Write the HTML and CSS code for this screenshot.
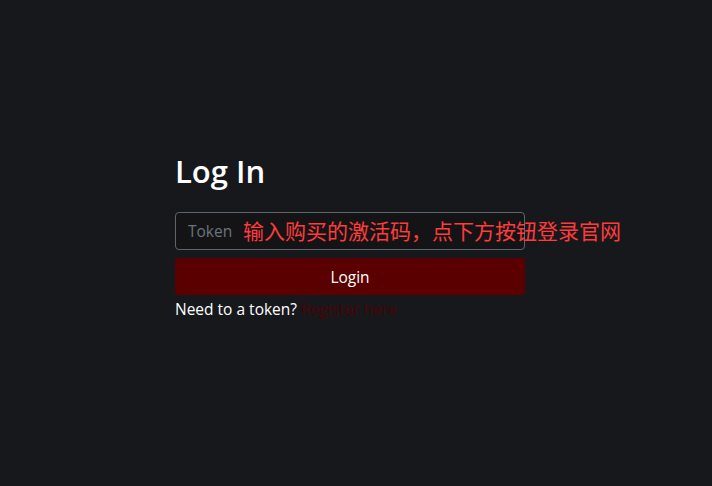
FILE: index.html
```html
<!DOCTYPE html>
<html lang="zh">
<head>
<meta charset="utf-8">
<title>Log In</title>
<link rel="stylesheet" href="styles.css">
</head>
<body>
<main class="page">
  <form class="login">
    <h1 class="title">Log In</h1>
    <div class="field">
      <input class="token" type="text" placeholder="Token">
      <span class="hint">输入购买的激活码，点下方按钮登录官网</span>
    </div>
    <button class="btn" type="button">Login</button>
    <p class="register">Need to a token? <a href="#" class="link">Register here</a></p>
  </form>
</main>
</body>
</html>
```
FILE: styles.css
```css
html, body {
  margin: 0;
  height: 100%;
  background: #17181c;
}
body {
  font-family: "Segoe UI", "Open Sans", "Noto Sans", "Noto Sans CJK SC", sans-serif;
  color: #ffffff;
}
.page {
  padding: 147px 0 0 175px;
}
.login {
  width: 350px;
}
.title {
  margin: 0 0 17px;
  font-size: 31px;
  font-weight: 600;
  line-height: 48px;
}
.field {
  position: relative;
}
.token {
  box-sizing: border-box;
  width: 350px;
  height: 38px;
  padding: 0 12px;
  background: #141416;
  border: 1px solid #5f646b;
  border-radius: 4px;
  color: #ffffff;
  font: inherit;
  font-size: 15.5px;
  outline: none;
}
.token::placeholder {
  color: #6c757d;
}
.hint {
  position: absolute;
  left: 68px;
  top: 5px;
  white-space: nowrap;
  color: #ff3b3b;
  font-family: "Noto Sans CJK SC", sans-serif;
  font-size: 21px;
  line-height: 26px;
}
.btn {
  display: block;
  width: 350px;
  height: 37px;
  margin-top: 8px;
  background: #5a0000;
  border: 0;
  border-radius: 4px;
  color: #ffffff;
  font: inherit;
  font-size: 15.5px;
}
.register {
  margin: 4px 0 0;
  font-size: 15.5px;
  line-height: 20px;
}
.link {
  color: #4a0306;
  text-decoration: none;
}
```
